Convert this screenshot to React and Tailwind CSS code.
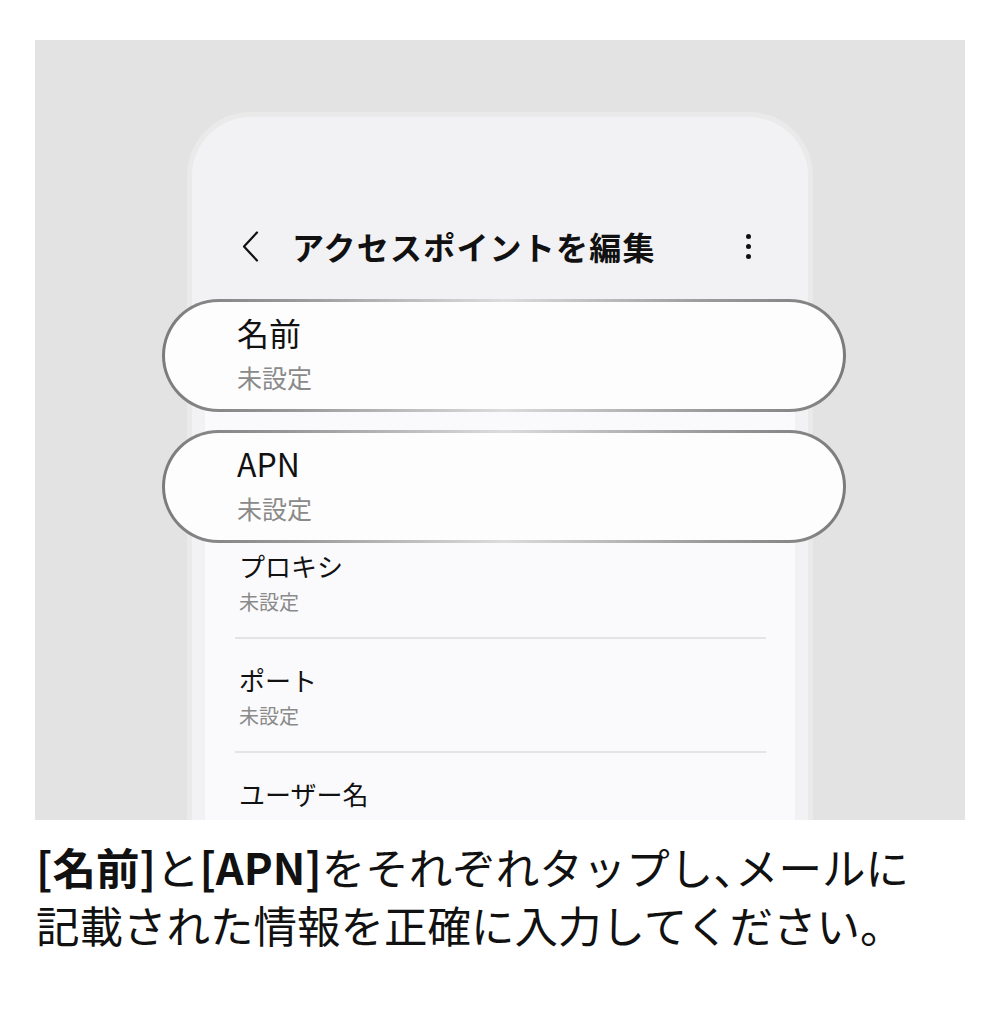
const jp = { fontFamily: '"Noto Sans CJK JP", "Noto Sans", sans-serif' }

// highlighted row: silver ring drawn as a gradient behind a white capsule
const HighlightRow = ({ title, value, className = '' }) => (
  <div
    className={`-ml-[43px] -mr-[51px] h-[113px] rounded-full p-[3px] bg-[linear-gradient(90deg,#7b7b7b_0%,#9a9a9a_20%,#dcdcdc_50%,#9a9a9a_80%,#7b7b7b_100%)] ${className}`}
  >
    <div className="h-full rounded-full bg-[#fdfdfe] pl-[72px] pt-[10px]">
      <p className="text-[32px] leading-[40px] text-[#111]">{title}</p>
      <p className="mt-[9px] text-[25px] leading-[32px] text-[#8a8a8a]">{value}</p>
    </div>
  </div>
)

const Row = ({ title, value, divider = true, top = 'pt-[24px]' }) => (
  <div>
    <div className={`pl-[34px] ${top}`}>
      <p className="text-[26px] leading-[34px] text-[#111]">{title}</p>
      {value && <p className="mt-[6px] text-[20px] leading-[26px] text-[#8a8a8a]">{value}</p>}
    </div>
    {divider && <div className="ml-[30px] mr-[29px] mt-[22px] h-[2px] bg-[#e4e4e6]" />}
  </div>
)

const App = () => {
  return (
    <div className="w-[1000px] h-[1016px] bg-white pt-[40px] px-[35px]" style={jp}>
      <div className="h-[780px] overflow-hidden bg-[#e3e3e3] pt-[72px] flex justify-center">
        <div className="w-[626px] h-[760px] rounded-t-[64px] border-[5px] border-b-0 border-[#eaeaea] bg-[#f2f2f4]">
          {/* header */}
          <div className="h-[182px] pt-[105px]">
            <div className="h-[48px] flex items-center pl-[50px] pr-[57px]">
              <svg width="17" height="31" viewBox="0 0 17 31" fill="none">
                <polyline points="15,1.5 2,15.5 15,29.5" stroke="#111" strokeWidth="2.2" strokeLinejoin="round" strokeLinecap="round" />
              </svg>
              <h1 className="ml-[33px] text-[32px] font-bold leading-[48px] text-[#111] tracking-[1.2px]">
                アクセスポイントを編集
              </h1>
              <div className="ml-auto flex flex-col items-center gap-[5px]">
                <span className="w-[5px] h-[5px] rounded-full bg-[#111]" />
                <span className="w-[5px] h-[5px] rounded-full bg-[#111]" />
                <span className="w-[5px] h-[5px] rounded-full bg-[#111]" />
              </div>
            </div>
          </div>

          {/* settings list */}
          <div className="mx-[13px] h-[600px] bg-[#fafafc]">
            <HighlightRow title="名前" value="未設定" />
            <HighlightRow title="APN" value="未設定" className="mt-[18px]" />
            <Row title="プロキシ" value="未設定" top="pt-[6px]" />
            <Row title="ポート" value="未設定" />
            <Row title="ユーザー名" divider={false} />
          </div>
        </div>
      </div>

      <div className="mt-[18px] pl-[1px] text-[43.5px] leading-[58px] text-[#111]">
        <p>
          <span className="font-bold">[名前]</span>と<span className="font-bold">[APN]</span>をそれぞれタップし<span className="tracking-[-0.5em]">、</span>メールに
        </p>
        <p>記載された情報を正確に入力してください。</p>
      </div>
    </div>
  )
}

export default App
